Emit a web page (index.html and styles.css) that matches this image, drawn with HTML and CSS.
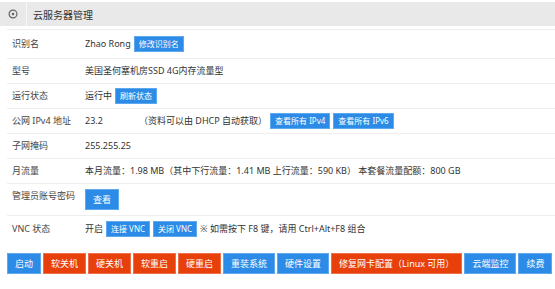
FILE: index.html
```html
<!DOCTYPE html>
<html lang="zh-CN">
<head>
<meta charset="UTF-8">
<meta name="viewport" content="width=device-width, initial-scale=1.0">
<title>云服务器管理</title>
<link rel="stylesheet" href="styles.css">
</head>
<body>

<!-- 标题栏 -->
<div class="header">
    <span class="header-icon">
        <svg width="10" height="10" viewBox="0 0 10 10">
            <circle cx="5" cy="5" r="3.9" fill="none" stroke="#666" stroke-width="1.2"/>
            <circle cx="5" cy="5" r="1.3" fill="#666"/>
        </svg>
    </span>
    <span class="header-title">云服务器管理</span>
</div>

<!-- 服务器信息 -->
<div class="info">
    <div class="row row-first">
        <div class="label">识别名</div>
        <div class="value">Zhao Rong <button class="btn btn-sm">修改识别名</button></div>
    </div>
    <div class="row">
        <div class="label">型号</div>
        <div class="value">美国圣何塞机房SSD 4G内存流量型</div>
    </div>
    <div class="row">
        <div class="label">运行状态</div>
        <div class="value">运行中 <button class="btn btn-sm">刷新状态</button></div>
    </div>
    <div class="row">
        <div class="label">公网 IPv4 地址</div>
        <div class="value">
            <span class="ip">23.2</span>
            <span>（资料可以由 DHCP 自动获取）</span>
            <button class="btn btn-sm">查看所有 IPv4</button>
            <button class="btn btn-sm">查看所有 IPv6</button>
        </div>
    </div>
    <div class="row">
        <div class="label">子网掩码</div>
        <div class="value">255.255.25</div>
    </div>
    <div class="row">
        <div class="label">月流量</div>
        <div class="value">本月流量：1.98 MB（其中下行流量：1.41 MB 上行流量：590 KB） 本套餐流量配额：800 GB</div>
    </div>
    <div class="row row-tall">
        <div class="label">管理员账号密码</div>
        <div class="value"><button class="btn btn-md">查看</button></div>
    </div>
    <div class="row row-last">
        <div class="label">VNC 状态</div>
        <div class="value">
            <span>开启</span>
            <button class="btn btn-sm">连接 VNC</button>
            <button class="btn btn-sm">关闭 VNC</button>
            <span>※ 如需按下 F8 键，请用 Ctrl+Alt+F8 组合</span>
        </div>
    </div>
</div>

<!-- 操作按钮 -->
<div class="actions">
    <button class="btn btn-lg">启动</button>
    <button class="btn btn-lg btn-red">软关机</button>
    <button class="btn btn-lg btn-red">硬关机</button>
    <button class="btn btn-lg btn-red">软重启</button>
    <button class="btn btn-lg btn-red">硬重启</button>
    <button class="btn btn-lg">重装系统</button>
    <button class="btn btn-lg">硬件设置</button>
    <button class="btn btn-lg btn-red">修复网卡配置（Linux 可用）</button>
    <button class="btn btn-lg">云端监控</button>
    <button class="btn btn-lg">续费</button>
</div>

</body>
</html>
```

FILE: styles.css
```css
/* 页面基础 */
body {
    margin: 0;
    font-family: "Noto Sans", "Noto Sans CJK SC", sans-serif;
    font-size: 9px;
    color: #333;
    background: #fff;
}

/* 标题栏 */
.header {
    display: flex;
    align-items: center;
    height: 24px;
    margin-top: 2px;
    background-color: #e9e9e9;
}
.header-icon {
    display: flex;
    align-items: center;
    justify-content: center;
    width: 26px;
    height: 100%;
    border-right: 1px solid #f6f6f6;
}
.header-icon svg {
    display: block;
}
.header-title {
    padding-left: 6px;
    font-size: 10px;
    color: #333;
}

/* 信息表 */
.info {
    margin: 3px 0 0 7px;
    border-top: 1px solid #eee;
}
.row {
    display: flex;
    align-items: flex-start;
    padding: 4px 0 4px 5px;
    border-bottom: 1px solid #eee;
    line-height: 16px;
}
.row-first {
    padding-top: 6px;
    padding-bottom: 6px;
}
.row-tall {
    padding-top: 5px;
    padding-bottom: 5px;
}
.row-last {
    padding-top: 5px;
    border-bottom: none;
}
.label {
    width: 73px;
    flex-shrink: 0;
    color: #444;
}
.row-tall .label {
    margin-top: -1px;
}
.value {
    display: flex;
    align-items: center;
    gap: 3px;
    white-space: nowrap;
}
.ip {
    width: 51px;
}

/* 按钮 */
.btn {
    display: inline-block;
    margin: 0;
    font-family: inherit;
    color: #fff;
    background-color: #2b8be6;
    border: 1px solid #5ea8ee;
    border-radius: 0;
    cursor: pointer;
    white-space: nowrap;
}
.btn-sm {
    height: 16px;
    padding: 0 4px;
    font-size: 8px;
    line-height: 14px;
}
.btn-md {
    height: 21px;
    padding: 0 7px;
    font-size: 9px;
    line-height: 19px;
}
.btn-lg {
    height: 21px;
    padding: 0 7px;
    font-size: 9px;
    line-height: 19px;
}
.btn-red {
    background-color: #e8400b;
    border-color: #ee7049;
}

/* 底部操作栏 */
.actions {
    display: flex;
    gap: 2px;
    margin: 12px 0 0 7px;
}
```
